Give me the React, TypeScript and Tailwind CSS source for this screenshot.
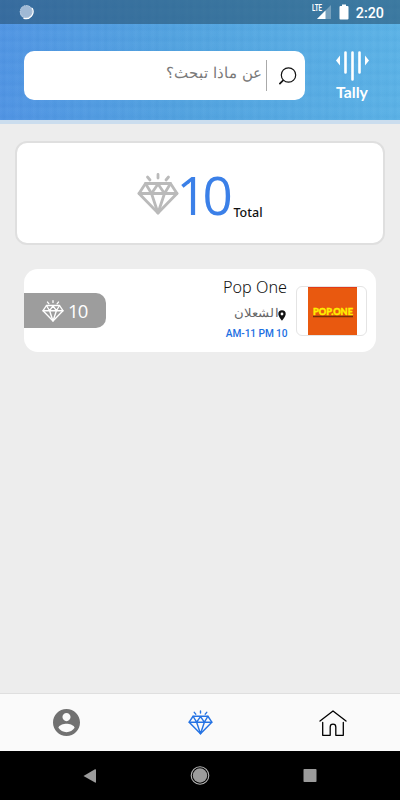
import { ReactNode } from "react";

const Diamond = ({ className, stroke }: { className: string; stroke: number }) => {
  return (
    <svg
      viewBox="0 0 42 42"
      className={className}
      fill="none"
      stroke="currentColor"
      strokeWidth={stroke}
      strokeLinecap="round"
      strokeLinejoin="round"
    >
      <path d="M8.500 10.500h25l6.500 10-19 19.500L2 20.500z" />
      <path d="M2 20.500h38M8.500 10.500l6 10L21 11l6.500 9.500 6-10M14.500 20.500 21 40l6.500-19.500" />
      <path d="M21 1.500v3.500M10.500 4l2.500 3M31.500 4l-2.500 3" />
    </svg>
  );
};

const StatusBar = () => {
  return (
    <div className="flex h-6 items-center justify-between bg-[#234a68]/55 pl-[19px] pr-4">
      <svg viewBox="0 0 16 16" className="h-4 w-4">
        <circle cx="7.500" cy="8" r="6.700" fill="#a0b9d5" />
        <path
          d="M13.300 4.500A7 7 0 0 1 5 14.300"
          fill="none"
          stroke="#fff"
          strokeWidth="1.300"
          strokeLinecap="round"
        />
        <circle cx="7.200" cy="7.500" r="6" fill="none" stroke="#c3d3e5" strokeWidth=".8" strokeDasharray="1.500 1" />
      </svg>
      <div className="flex h-6 items-center">
        <svg viewBox="0 0 20 16" className="mr-[7px] h-4 w-5">
          <path d="M19 1v14H5z" fill="#fff" fillOpacity=".3" />
          <path d="M13.500 6.500V15H5z" fill="#fff" />
          <text
            x="0"
            y="6.700"
            fill="#fff"
            fontSize="8.500"
            fontWeight="700"
            fontFamily="Roboto, sans-serif"
            textLength="10"
            lengthAdjust="spacingAndGlyphs"
          >
            LTE
          </text>
        </svg>
        <svg viewBox="0 0 10 16" className="mr-[7px] h-4 w-[10px]" fill="#fff">
          <path d="M3 .5h4V2h1.500q1 0 1 1v11.500q0 1-1 1h-7q-1 0-1-1V3q0-1 1-1H3z" />
        </svg>
        <span className="pt-0.5 font-['Roboto'] text-[14.3px] font-medium leading-none text-white">
          2:20
        </span>
      </div>
    </div>
  );
};

const Header = () => {
  return (
    <header className="h-[124px] border-b-4 border-[#cbddee] bg-[repeating-linear-gradient(90deg,rgba(255,255,255,0.02)_0px,rgba(0,50,110,0.02)_4px,rgba(255,255,255,0.015)_7px,rgba(0,50,110,0.01)_13px,rgba(255,255,255,0.02)_17px),repeating-linear-gradient(0deg,rgba(255,255,255,0.02)_0px,rgba(0,50,110,0.02)_3px,rgba(255,255,255,0.01)_8px,rgba(255,255,255,0.02)_11px),linear-gradient(80deg,#5094e4_0%,#52a3e0_45%,#5bb3e7_100%)]">
      <StatusBar />
      <div className="flex pl-6 pt-[27px]">
        {/* search field */}
        <div className="flex h-[49px] w-[281px] items-center justify-end rounded-[10px] bg-white pr-2">
          <span
            dir="rtl"
            className="mb-1 whitespace-nowrap font-['DejaVu_Sans',sans-serif] text-[15.3px] font-extralight text-[#7a7a7a]"
          >
            عن ماذا تبحث؟
          </span>
          <span className="ml-1 h-[31px] w-px bg-[#aaa]" />
          <svg
            viewBox="0 0 18 18"
            className="ml-3 h-[18px] w-[18px]"
            fill="none"
            stroke="#111"
            strokeWidth="1.200"
          >
            <circle cx="9.500" cy="8" r="7.200" />
            <path d="m4.400 13.100-4 4" strokeWidth="1.600" />
          </svg>
        </div>
        <div className="ml-[29px] w-9 text-white">
          <svg viewBox="0 0 34 30" className="ml-0.5 h-[30px] w-[34px]" fill="currentColor">
            <path d="M0 9.500 4 4.500v10zM33 9.500l-4-5v10z" />
            <path
              d="M9.500 1.500v20M16.500 1.500v27M23.500 1.500v20"
              stroke="currentColor"
              strokeWidth="2.600"
              strokeLinecap="round"
            />
          </svg>
          <p className="ml-0.5 mt-0.5 whitespace-nowrap font-['Lato'] text-[15.8px] font-bold leading-[18px]">
            Tally
          </p>
        </div>
      </div>
    </header>
  );
};

const TotalCard = () => {
  return (
    <section className="mx-[15px] mt-[17px] flex h-[104px] justify-center rounded-xl border-2 border-[#dfdfdf] bg-white">
      <Diamond className="mt-[30px] h-[42px] w-[42px] text-[#bababa]" stroke={2.8} />
      <span className="-ml-[3px] mr-px mt-[14px] font-['Open_Sans'] text-[53px] font-normal leading-[76px] tracking-[-4.3px] text-[#3b80e8]">
        10
      </span>
      <span className="ml-1 mt-[61px] font-['Noto_Sans'] text-[12.5px] font-medium leading-[18px] text-[#111]">
        Total
      </span>
    </section>
  );
};

const StoreCard = () => {
  return (
    <section className="mx-6 mt-6 flex h-[83px] justify-between rounded-[14px] bg-white pr-[9px]">
      <div className="mt-6 flex h-[35px] w-[82px] items-center rounded-r-[10px] bg-[#9d9d9d] pl-[18px] text-white">
        <Diamond className="h-[22px] w-[22px]" stroke={2.6} />
        <span className="ml-1 mt-px font-['Open_Sans'] text-[18.5px] font-normal leading-none tracking-[-0.9px]">
          10
        </span>
      </div>
      <div className="flex">
        <div className="mr-[9px] flex flex-col items-end whitespace-nowrap">
          <h2 className="mt-1.5 font-['Noto_Sans'] text-[16.2px] font-light leading-6 text-[#111]">
            Pop One
          </h2>
          <div className="mr-px mt-1.5 flex h-[18px] items-center">
            <span
              dir="rtl"
              className="origin-right scale-x-110 font-['DejaVu_Sans',sans-serif] text-[11.5px] font-extralight text-[#666]"
            >
              الشعلان
            </span>
            <svg viewBox="0 0 8 11" className="mt-0.5 h-[11px] w-2">
              <path
                fillRule="evenodd"
                fill="#111"
                d="M4 .3A3.700 3.700 0 0 0 .3 4C.3 6.500 4 10.700 4 10.700S7.700 6.500 7.700 4A3.700 3.700 0 0 0 4 .3m0 2.300a1.400 1.400 0 1 1 0 2.800 1.400 1.400 0 0 1 0-2.800"
              />
            </svg>
          </div>
          <p className="mt-[3px] origin-right scale-x-[0.9] font-['Roboto'] text-[11.3px] font-medium leading-4 tracking-[-0.1px] text-[#1c6fe2]">
            AM-11 PM 10
          </p>
        </div>
        <div className="mt-[17px] flex h-[50px] w-[71px] justify-center rounded-md border border-[#e4e4e4]">
          <svg viewBox="0 0 49 48" className="ml-px h-12 w-[49px]">
            <rect width="49" height="48" fill="#e9590f" />
            <rect width="49" height="1" fill="#e23a16" />
            <text
              x="5"
              y="28"
              fontFamily="Lato, sans-serif"
              fontWeight="900"
              fontSize="9.500"
              textLength="40"
              lengthAdjust="spacingAndGlyphs"
              fill="#fff000"
              stroke="#fff000"
              strokeWidth=".4"
            >
              POP.ONE
            </text>
            <path d="M5 29.500h40" stroke="#742f08" strokeWidth="1.300" />
          </svg>
        </div>
      </div>
    </section>
  );
};

const Tab = ({ children }: { children: ReactNode }) => {
  return <div className="flex flex-1 items-center justify-center">{children}</div>;
};

const BottomTabs = () => {
  return (
    <nav className="flex h-[58px] border-t border-[#dfdfdf] bg-[#fafafa]">
      <Tab>
        <svg viewBox="2 2 20 20" className="h-[27px] w-[27px]" fill="#717171">
          <path d="M12 2C6.480 2 2 6.480 2 12s4.480 10 10 10 10-4.480 10-10S17.520 2 12 2zm0 3c1.660 0 3 1.340 3 3s-1.340 3-3 3-3-1.340-3-3 1.340-3 3-3zm0 14.200c-2.500 0-4.710-1.280-6-3.220.03-1.990 4-3.080 6-3.080 1.990 0 5.970 1.090 6 3.080-1.290 1.940-3.500 3.220-6 3.220z" />
        </svg>
      </Tab>
      <Tab>
        <Diamond className="ml-px h-[25px] w-[25px] text-[#2573e3]" stroke={2.4} />
      </Tab>
      <Tab>
        <svg
          viewBox="0 0 28 28"
          className="h-7 w-7"
          fill="none"
          stroke="#000"
          strokeWidth="1.300"
          strokeLinejoin="round"
          strokeLinecap="round"
        >
          <path d="M1 12 14 2l13 10" />
          <path d="M3.700 13.500v12.800h7.500V18a2.800 2.800 0 0 1 5.600 0v8.300h7.500V13.500" />
        </svg>
      </Tab>
    </nav>
  );
};

const SystemNav = () => {
  return (
    <div className="flex h-[49px] items-center justify-between bg-black px-[82px]">
      <svg viewBox="0 0 16 16" className="h-4 w-4" fill="#9b9b9b">
        <path d="M1.500 8 13 1.300q1-.4 1 .7v12q0 1-1 .5L1.500 8z" />
      </svg>
      <svg viewBox="0 0 20 20" className="h-5 w-5">
        <circle cx="10" cy="9.500" r="8.800" fill="none" stroke="#b5b5b5" strokeWidth="1.100" />
        <circle cx="10" cy="9.500" r="7.200" fill="#9b9b9b" />
      </svg>
      <svg viewBox="0 0 16 16" className="h-4 w-4">
        <rect x="1.500" y="1" width="13" height="13" rx=".8" fill="#9b9b9b" />
      </svg>
    </div>
  );
};

export default function App() {
  return (
    <div className="flex h-screen w-full flex-col overflow-hidden bg-[#ededed]">
      <Header />
      <main className="grow">
        <TotalCard />
        <StoreCard />
      </main>
      <BottomTabs />
      <SystemNav />
    </div>
  );
}
